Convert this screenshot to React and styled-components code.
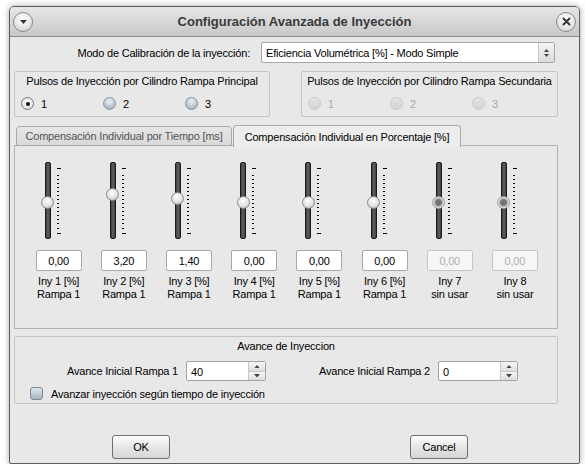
import React from "react";
import styled, { createGlobalStyle } from "styled-components";

const GlobalStyle = createGlobalStyle`
  body {
    margin: 0;
    background: #ffffff;
    font-family: "Liberation Sans", Arial, sans-serif;
    font-size: 11px;
    letter-spacing: -0.2px;
    color: #000;
  }
`;

const Page = styled.div`
  padding: 6px 0 0 9px;
`;

const Window = styled.div`
  width: 571px;
  height: 458px;
  box-sizing: border-box;
  border: 1px solid #5c5c5c;
  border-radius: 5px 5px 2px 2px;
  background: #e8e8e8;
  box-shadow: 0 0 6px rgba(0, 0, 0, 0.35);
  overflow: hidden;
  display: flex;
  flex-direction: column;
`;

const TitleBar = styled.div`
  height: 29px;
  flex-shrink: 0;
  border-bottom: 1px solid #8c8c8c;
  background: linear-gradient(#e6e6e6, #c8c8c8);
  display: flex;
  align-items: center;
  padding: 0 3px;
`;

const TitleText = styled.div`
  flex: 1;
  text-align: center;
  font-size: 13px;
  font-weight: 700;
  letter-spacing: 0;
  color: #3a3a3a;
`;

const RoundBtn = styled.div`
  width: 20px;
  height: 20px;
  box-sizing: border-box;
  border-radius: 50%;
  border: 1px solid #8a8a8a;
  background: radial-gradient(circle at 50% 35%, #ffffff, #e4e4e4 60%, #c6c6c6);
  display: flex;
  align-items: center;
  justify-content: center;
`;

const Body = styled.div`
  flex: 1;
  padding: 5px 21px 0 4px;
  display: flex;
  flex-direction: column;
`;

const ModeRow = styled.div`
  display: flex;
  align-items: center;
  gap: 11px;
  padding-right: 3px;
  height: 21px;
`;

const ModeLabel = styled.div`
  flex: 1;
  text-align: right;
`;

const Combo = styled.div`
  width: 294px;
  height: 21px;
  box-sizing: border-box;
  border: 1px solid #a6a6a6;
  border-radius: 2px;
  background: #fff;
  display: flex;
  align-items: stretch;
`;

const ComboText = styled.div`
  flex: 1;
  padding-left: 4px;
  display: flex;
  align-items: center;
`;

const ArrowBox = styled.div`
  width: 15px;
  border-left: 1px solid #c8c8c8;
  background: linear-gradient(#f4f4f4, #dadada);
  display: flex;
  flex-direction: column;
  align-items: center;
  justify-content: center;
  gap: 2px;
`;

const GroupRow = styled.div`
  display: flex;
  gap: 31px;
  margin-top: 8px;
`;

const Group = styled.div`
  width: ${(p) => p.$w}px;
  height: ${(p) => p.$h}px;
  box-sizing: border-box;
  border: 1px solid #c4c4c4;
  border-radius: 2px;
  padding-top: 3px;
  display: flex;
  flex-direction: column;
`;

const GroupTitle = styled.div`
  text-align: center;
  line-height: 13px;
  white-space: nowrap;
`;

const RadioRow = styled.div`
  display: grid;
  grid-template-columns: repeat(3, 82px);
  padding-left: 6px;
  margin-top: 9px;
`;

const RadioItem = styled.label`
  display: flex;
  align-items: center;
  gap: 7px;
  color: ${(p) => (p.$disabled ? "#a8a8a8" : "#000")};
`;

const RadioDot = styled.span`
  width: 13px;
  height: 13px;
  box-sizing: border-box;
  border-radius: 50%;
  display: inline-flex;
  align-items: center;
  justify-content: center;
  border: 1px solid
    ${(p) => (p.$disabled ? "#cacaca" : p.$checked ? "#7a7a7a" : "#8893a0")};
  background: ${(p) =>
    p.$disabled
      ? "linear-gradient(#e4e4e4, #d4d4d4)"
      : p.$checked
      ? "radial-gradient(circle at 50% 40%, #ffffff, #d4d4d4)"
      : "radial-gradient(circle at 50% 30%, #eef1f4, #b2bcc8 70%, #9da8b6)"};
  &::after {
    content: "";
    width: 4px;
    height: 4px;
    border-radius: 50%;
    background: #111;
    display: ${(p) => (p.$checked ? "block" : "none")};
  }
`;

const TabBar = styled.div`
  display: flex;
  align-items: flex-end;
  gap: 1px;
  margin-top: 7px;
  padding-left: 2px;
  height: 22px;
  position: relative;
  z-index: 1;
`;

const Tab = styled.div`
  width: ${(p) => p.$w}px;
  height: ${(p) => (p.$active ? 22 : 20)}px;
  box-sizing: border-box;
  border: 1px solid #a9a9a9;
  border-bottom: ${(p) => (p.$active ? "none" : "1px solid #a9a9a9")};
  border-radius: 4px 4px 0 0;
  background: ${(p) =>
    p.$active ? "#ededed" : "linear-gradient(#e6e6e6, #d9d9d9)"};
  color: ${(p) => (p.$active ? "#000" : "#555")};
  display: flex;
  align-items: center;
  justify-content: center;
  margin-bottom: ${(p) => (p.$active ? -1 : 0)}px;
`;

const Pane = styled.div`
  height: 184px;
  box-sizing: border-box;
  border: 1px solid #b2b2b2;
  margin-top: -1px;
  background: #e8e8e8;
  padding: 16px 0 0 11px;
`;

const SliderGrid = styled.div`
  display: grid;
  grid-template-columns: repeat(8, 65.2px);
`;

const SliderCol = styled.div`
  display: flex;
  flex-direction: column;
  align-items: center;
`;

const SliderBox = styled.div`
  display: flex;
  gap: 6px;
  height: 77px;
  margin-right: 12px;
`;

const Groove = styled.div`
  position: relative;
  width: 6px;
  height: 77px;
  box-sizing: border-box;
  border: 1px solid #1a1a1a;
  border-radius: 2px;
  background: linear-gradient(to right, #3c3c3c, #626262 50%, #3c3c3c);
`;

const Handle = styled.div`
  position: absolute;
  left: 50%;
  width: 13px;
  height: 13px;
  margin: -6.5px 0 0 -6.5px;
  box-sizing: border-box;
  border-radius: 50%;
  border: 1px solid ${(p) => (p.$disabled ? "#9a9a9a" : "#8c8c8c")};
  background: ${(p) =>
    p.$disabled
      ? "radial-gradient(circle, #6a6a6a 0, #7c7c7c 3px, #b4b4b4 4px, #eeeeee 5.5px)"
      : "radial-gradient(circle at 45% 35%, #ffffff, #e2e2e2 55%, #a8a8a8)"};
`;

const ValueBox = styled.div`
  margin-top: 11px;
  width: 46px;
  height: 21px;
  box-sizing: border-box;
  border: 1px solid ${(p) => (p.$disabled ? "#c6c6c6" : "#a8a8a8")};
  border-radius: 2px;
  background: ${(p) => (p.$disabled ? "#f6f6f6" : "#fff")};
  color: ${(p) => (p.$disabled ? "#b0b0b0" : "#000")};
  display: flex;
  align-items: center;
  justify-content: center;
`;

const ColLabel = styled.div`
  margin-top: 4px;
  text-align: center;
  line-height: 13px;
  white-space: nowrap;
`;

const AvanceGroup = styled(Group)`
  margin-top: 7px;
`;

const SpinRow = styled.div`
  display: flex;
  align-items: center;
  margin-top: 8px;
`;

const SpinLabel = styled.div`
  width: ${(p) => p.$w}px;
  text-align: right;
  padding-right: 8px;
  box-sizing: border-box;
`;

const Spin = styled.div`
  width: 80px;
  height: 20px;
  box-sizing: border-box;
  border: 1px solid #a2a2a2;
  border-radius: 2px;
  background: #fff;
  display: flex;
`;

const SpinText = styled.div`
  flex: 1;
  padding: 4px 0 0 4px;
`;

const SpinArrows = styled.div`
  width: 16px;
  border-left: 1px solid #c6c6c6;
  display: flex;
  flex-direction: column;
`;

const SpinHalf = styled.div`
  flex: 1;
  background: linear-gradient(#f6f6f6, #dedede);
  display: flex;
  align-items: center;
  justify-content: center;
  & + & {
    border-top: 1px solid #c6c6c6;
  }
`;

const CheckRow = styled.label`
  display: flex;
  align-items: center;
  gap: 8px;
  margin: 6px 0 0 15px;
`;

const CheckBox = styled.span`
  width: 13px;
  height: 13px;
  box-sizing: border-box;
  border-radius: 3px;
  border: 1px solid #7d8898;
  background: linear-gradient(#dfe5ec, #a9b5c3);
`;

const ButtonRow = styled.div`
  display: flex;
  margin-top: 31px;
  padding-left: 98px;
  gap: 240px;
`;

const Button = styled.div`
  width: 58px;
  height: 24px;
  box-sizing: border-box;
  border: 1px solid #6e6e6e;
  border-radius: 3px;
  background: linear-gradient(#fdfdfd, #e6e6e6 50%, #d6d6d6);
  display: flex;
  align-items: center;
  justify-content: center;
`;

const Tri = ({ up, size = 6, color = "#333" }) => (
  <svg width={size} height={size / 2 + 0.5} viewBox="0 0 6 3.5">
    <path d={up ? "M0 3.5 L3 0 L6 3.5 Z" : "M0 0 L6 0 L3 3.5 Z"} fill={color} />
  </svg>
);

const Ticks = () => {
  const ys = [];
  for (let i = 0; i < 14; i++) ys.push(12.5 + (i * 53) / 13);
  return (
    <svg width="4" height="77" viewBox="0 0 4 77">
      <line x1="0" x2="4" y1="6.5" y2="6.5" stroke="#000" strokeWidth="1" />
      {ys.map((y) => (
        <line key={y} x1="0" x2="2" y1={Math.round(y) + 0.5} y2={Math.round(y) + 0.5} stroke="#000" strokeWidth="1" />
      ))}
      <line x1="0" x2="4" y1="71.5" y2="71.5" stroke="#000" strokeWidth="1" />
    </svg>
  );
};

const channels = [
  { v: 0, l1: "Iny 1 [%]", l2: "Rampa 1" },
  { v: 3.2, l1: "Iny 2 [%]", l2: "Rampa 1" },
  { v: 1.4, l1: "Iny 3 [%]", l2: "Rampa 1" },
  { v: 0, l1: "Iny 4 [%]", l2: "Rampa 1" },
  { v: 0, l1: "Iny 5 [%]", l2: "Rampa 1" },
  { v: 0, l1: "Iny 6 [%]", l2: "Rampa 1" },
  { v: 0, l1: "Iny 7", l2: "sin usar", off: true },
  { v: 0, l1: "Iny 8", l2: "sin usar", off: true },
];

const Radios = ({ checked, disabled }) => (
  <RadioRow>
    {[1, 2, 3].map((n) => (
      <RadioItem key={n} $disabled={disabled}>
        <RadioDot $checked={checked === n} $disabled={disabled} />
        {n}
      </RadioItem>
    ))}
  </RadioRow>
);

const SpinBox = ({ value }) => (
  <Spin>
    <SpinText>{value}</SpinText>
    <SpinArrows>
      <SpinHalf>
        <Tri up size={6} color="#444" />
      </SpinHalf>
      <SpinHalf>
        <Tri size={6} color="#444" />
      </SpinHalf>
    </SpinArrows>
  </Spin>
);

export default function App() {
  return (
    <Page>
      <GlobalStyle />
      <Window>
        <TitleBar>
          <RoundBtn>
            <Tri size={7} color="#333" />
          </RoundBtn>
          <TitleText>Configuración Avanzada de Inyección</TitleText>
          <RoundBtn>
            <svg width="9" height="9" viewBox="0 0 9 9">
              <path d="M1.5 1.5 L7.5 7.5 M7.5 1.5 L1.5 7.5" stroke="#333" strokeWidth="2" strokeLinecap="round" />
            </svg>
          </RoundBtn>
        </TitleBar>
        <Body>
          <ModeRow>
            <ModeLabel>Modo de Calibración de la inyección:</ModeLabel>
            <Combo>
              <ComboText>Eficiencia Volumétrica [%] - Modo Simple</ComboText>
              <ArrowBox>
                <Tri up size={5} color="#444" />
                <Tri size={5} color="#444" />
              </ArrowBox>
            </Combo>
          </ModeRow>

          <GroupRow>
            <Group $w={256} $h={46}>
              <GroupTitle>Pulsos de Inyección por Cilindro Rampa Principal</GroupTitle>
              <Radios checked={1} />
            </Group>
            <Group $w={257} $h={46}>
              <GroupTitle>Pulsos de Inyección por Cilindro Rampa Secundaria</GroupTitle>
              <Radios disabled />
            </Group>
          </GroupRow>

          <TabBar>
            <Tab $w={216}>Compensación Individual por Tiempo [ms]</Tab>
            <Tab $w={228} $active>
              Compensación Individual en Porcentaje [%]
            </Tab>
          </TabBar>
          <Pane>
            <SliderGrid>
              {channels.map((c, i) => (
                <SliderCol key={i}>
                  <SliderBox>
                    <Groove>
                      <Handle $disabled={c.off} style={{ top: 39 - c.v * 2.2 }} />
                    </Groove>
                    <Ticks />
                  </SliderBox>
                  <ValueBox $disabled={c.off}>{c.v.toFixed(2).replace(".", ",")}</ValueBox>
                  <ColLabel>
                    {c.l1}
                    <br />
                    {c.l2}
                  </ColLabel>
                </SliderCol>
              ))}
            </SliderGrid>
          </Pane>

          <AvanceGroup $w={544} $h={68}>
            <GroupTitle>Avance de Inyeccion</GroupTitle>
            <SpinRow>
              <SpinLabel $w={171}>Avance Inicial Rampa 1</SpinLabel>
              <SpinBox value="40" />
              <SpinLabel $w={172}>Avance Inicial Rampa 2</SpinLabel>
              <SpinBox value="0" />
            </SpinRow>
            <CheckRow>
              <CheckBox />
              Avanzar inyección según tiempo de inyección
            </CheckRow>
          </AvanceGroup>

          <ButtonRow>
            <Button>OK</Button>
            <Button>Cancel</Button>
          </ButtonRow>
        </Body>
      </Window>
    </Page>
  );
}
